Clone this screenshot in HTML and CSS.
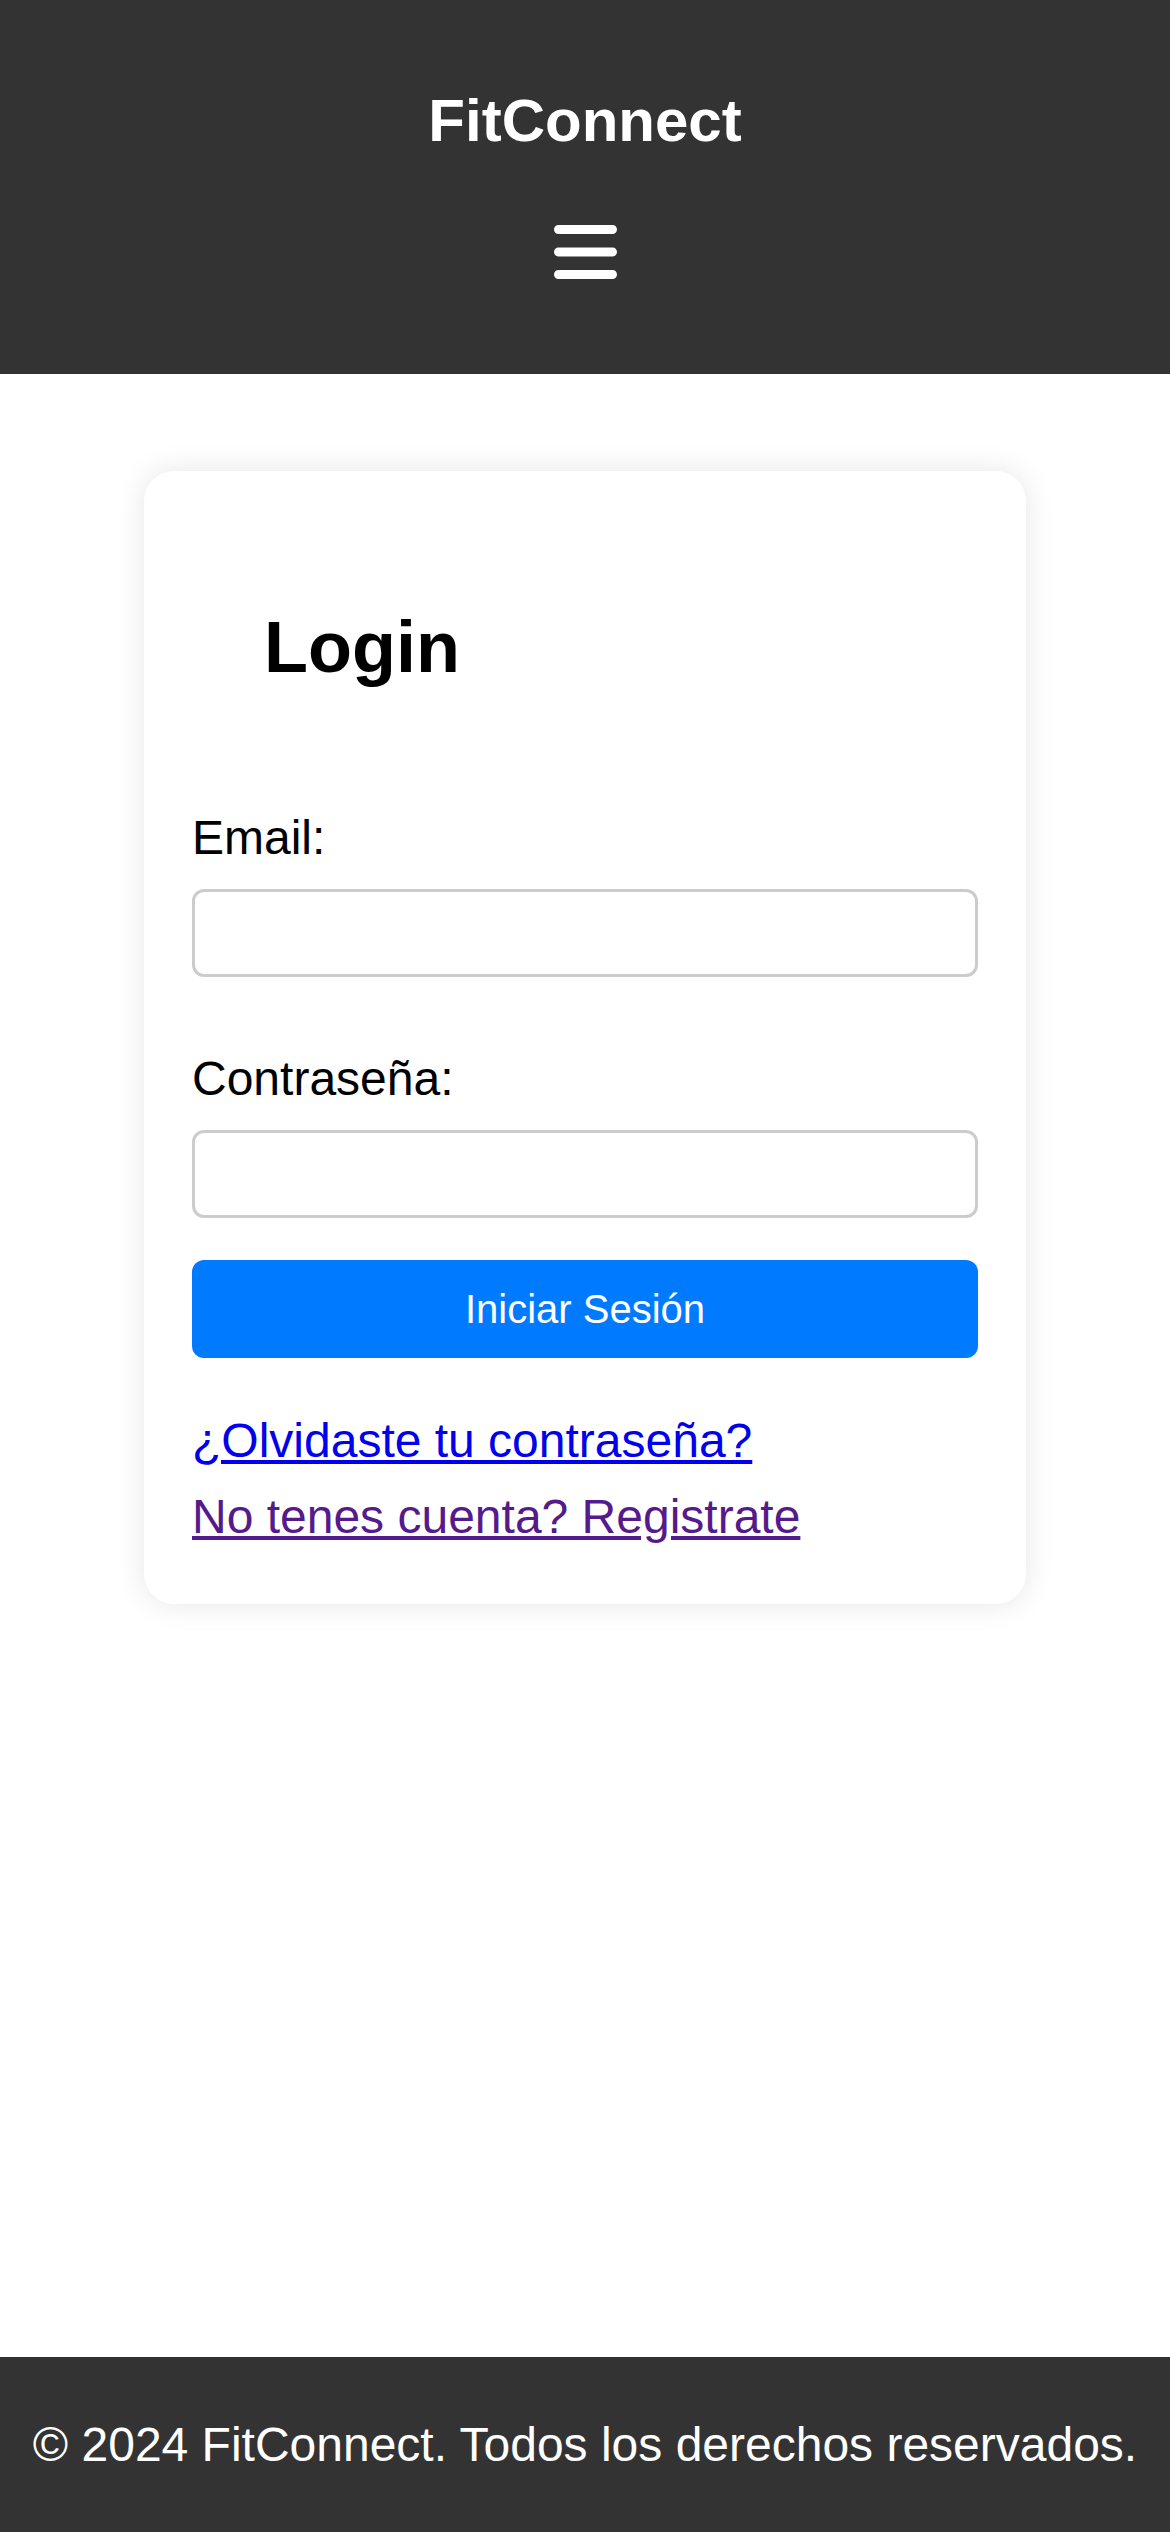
FILE: index.html
```html
<!DOCTYPE html>
<html lang="es">
<head>
<meta charset="utf-8">
<title>FitConnect - Login</title>
<link rel="stylesheet" href="styles.css">
</head>
<body>
<header class="site-header">
  <h1 class="brand">FitConnect</h1>
  <button class="menu-toggle" type="button" aria-label="Menú">
    <svg viewBox="0 0 448 512" width="63" height="72" aria-hidden="true"><path fill="#fff" d="M0 96C0 78.3 14.3 64 32 64H416c17.7 0 32 14.3 32 32s-14.3 32-32 32H32C14.3 128 0 113.7 0 96zM0 256c0-17.7 14.3-32 32-32H416c17.7 0 32 14.3 32 32s-14.3 32-32 32H32c-17.7 0-32-14.3-32-32zM448 416c0 17.7-14.3 32-32 32H32c-17.7 0-32-14.3-32-32s14.3-32 32-32H416c17.7 0 32 14.3 32 32z"/></svg>
  </button>
</header>
<main class="content">
  <section class="card">
    <h2 class="card-title">Login</h2>
    <form class="login-form">
      <div class="field">
        <label for="email">Email:</label>
        <input type="email" id="email" name="email">
      </div>
      <div class="field">
        <label for="password">Contraseña:</label>
        <input type="password" id="password" name="password">
      </div>
      <button type="submit" class="btn-primary">Iniciar Sesión</button>
    </form>
    <div class="links">
      <a href="#recuperar" class="link">¿Olvidaste tu contraseña?</a>
      <a href="#registro" class="link link-visited">No tenes cuenta? Registrate</a>
    </div>
  </section>
</main>
<footer class="site-footer">
  <p class="footer-text">© 2024 FitConnect. Todos los derechos reservados.</p>
</footer>
</body>
</html>
```

FILE: styles.css
```css
* {
  box-sizing: border-box;
}

html, body {
  margin: 0;
  padding: 0;
}

body {
  min-height: 100vh;
  display: flex;
  flex-direction: column;
  font-family: "Liberation Sans", Arial, sans-serif;
  background: #fff;
  color: #000;
}

.site-header {
  background: #333333;
  padding: 87px 0 86px;
  display: flex;
  flex-direction: column;
  align-items: center;
}

.brand {
  margin: 0;
  font-size: 60px;
  line-height: 67px;
  font-weight: bold;
  color: #fff;
}

.menu-toggle {
  margin-top: 62px;
  padding: 0;
  border: 0;
  background: none;
  width: 63px;
  height: 72px;
  cursor: pointer;
}

.menu-toggle svg {
  display: block;
}

.content {
  flex: 1;
  padding-top: 97px;
  display: flex;
  justify-content: center;
  align-items: flex-start;
}

.card {
  width: 882px;
  background: #fff;
  border-radius: 30px;
  box-shadow: 0 0 30px rgba(0, 0, 0, 0.1);
  padding: 48px 48px 60px;
}

.card-title {
  margin: 87px 0 121px;
  padding-left: 72px;
  font-size: 72px;
  line-height: 83px;
  font-weight: bold;
}

.field + .field {
  margin-top: 74px;
}

.field label {
  display: block;
  font-size: 48px;
  line-height: 55px;
  margin-bottom: 24px;
}

.field input {
  display: block;
  width: 100%;
  height: 88px;
  border: 3px solid #cccccc;
  border-radius: 12px;
  background: #fff;
  font-size: 48px;
  font-family: inherit;
  padding: 0 24px;
}

.btn-primary {
  display: block;
  width: 100%;
  height: 98px;
  margin-top: 42px;
  border: 0;
  border-radius: 12px;
  background: #007bff;
  color: #fff;
  font-family: inherit;
  font-size: 40px;
  line-height: 46px;
  cursor: pointer;
}

.links {
  margin-top: 55px;
}

.link {
  display: table;
  font-size: 48px;
  line-height: 55px;
  color: #0000ee;
}

.link + .link {
  margin-top: 21px;
}

.link-visited {
  color: #551a8b;
}

.site-footer {
  background: #333333;
  color: #fff;
  padding: 60px 0;
  text-align: center;
}

.footer-text {
  margin: 0;
  font-size: 48px;
  line-height: 55px;
}
```
